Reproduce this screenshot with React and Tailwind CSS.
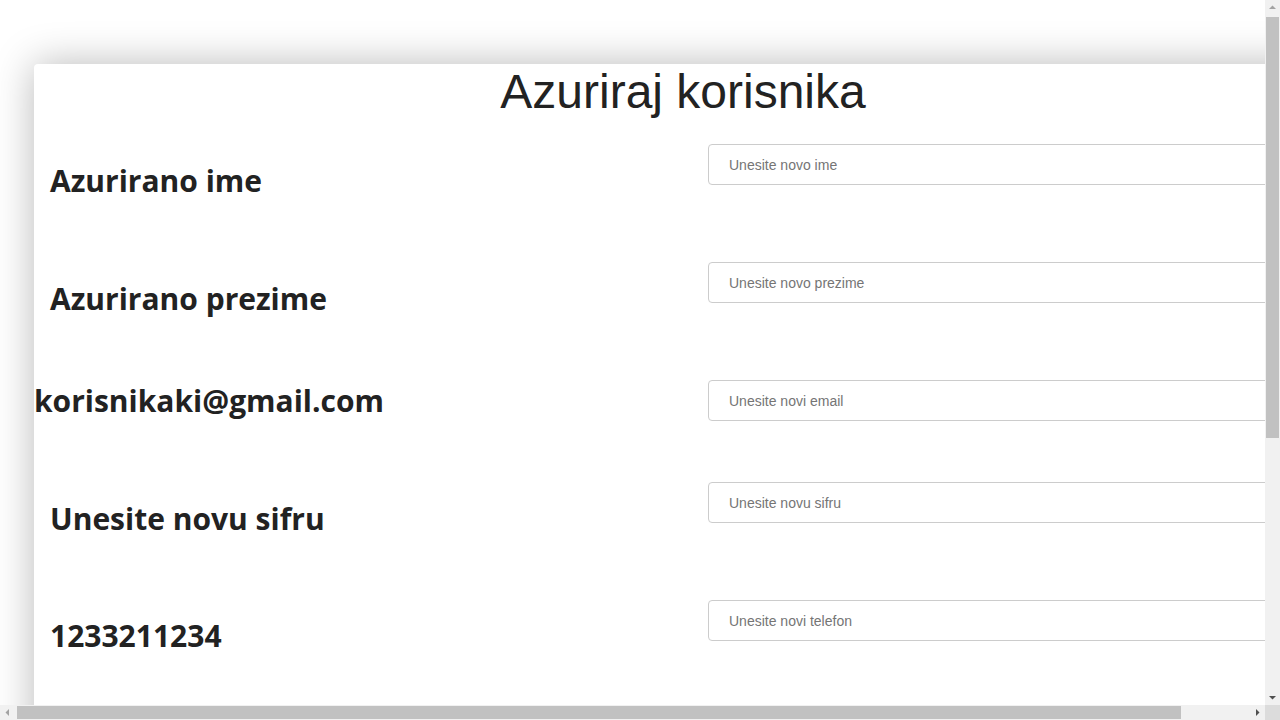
import React from "react";

const rows = [
  { label: "Azurirano ime", placeholder: "Unesite novo ime", type: "text", h: "h-[118px]", pt: "pt-[17px]", pl: "pl-4" },
  { label: "Azurirano prezime", placeholder: "Unesite novo prezime", type: "text", h: "h-[118px]", pt: "pt-[17px]", pl: "pl-4" },
  { label: "korisnikaki@gmail.com", placeholder: "Unesite novi email", type: "email", h: "h-[102px]", pt: "pt-[1px]", pl: "pl-0" },
  { label: "Unesite novu sifru", placeholder: "Unesite novu sifru", type: "password", h: "h-[118px]", pt: "pt-[17px]", pl: "pl-4" },
  { label: "1233211234", placeholder: "Unesite novi telefon", type: "tel", h: "h-[118px]", pt: "pt-[16px]", pl: "pl-4" },
];

// fake window scrollbars, the screenshot shows them
function Scrollbars() {
  return (
    <>
      <div className="fixed right-0 top-0 flex h-[705px] w-[15px] flex-col items-center bg-[#f1f1f1]">
        <svg width="15" height="15" viewBox="0 0 15 15" className="shrink-0">
          <path d="M4 9h7L7.5 5.5z" fill="#a3a3a3" />
        </svg>
        <div className="mt-[2px] h-[421px] w-[13px] bg-[#c1c1c1]" />
        <div className="flex-1" />
        <svg width="15" height="15" viewBox="0 0 15 15" className="shrink-0">
          <path d="M4 6h7L7.5 9.5z" fill="#505050" />
        </svg>
      </div>
      <div className="fixed bottom-0 left-0 flex h-[15px] w-[1265px] items-center bg-[#f1f1f1]">
        <svg width="15" height="15" viewBox="0 0 15 15" className="shrink-0">
          <path d="M9 4v7L5.5 7.5z" fill="#a3a3a3" />
        </svg>
        <div className="ml-[2px] h-[13px] w-[1164px] bg-[#c1c1c1]" />
        <div className="flex-1" />
        <svg width="15" height="15" viewBox="0 0 15 15" className="shrink-0">
          <path d="M6 4v7l3.5-3.5z" fill="#505050" />
        </svg>
      </div>
      <div className="fixed bottom-0 right-0 h-[15px] w-[15px] bg-[#dcdcdc]" />
    </>
  );
}

export default function App() {
  return (
    <div className="min-h-screen w-[1342px] bg-white pt-16 pl-[34px] pb-[20px]">
      <div className="w-[1298px] rounded-[4px] bg-white pb-[280px] shadow-[0_0_40px_rgba(0,0,0,0.28)]">
        <h1 className="text-center font-['Liberation_Sans',Arial,sans-serif] text-[48px] leading-[55px] text-[#222]">
          Azuriraj korisnika
        </h1>

        <form className="mt-[25px] flex flex-col">
          {rows.map((r) => (
            <div key={r.placeholder} className={`flex items-start ${r.h}`}>
              <div className={`w-[674px] shrink-0 ${r.pt} ${r.pl}`}>
                <h2 className="font-['Open_Sans','Noto_Sans',sans-serif] text-[30px] font-bold leading-[40px] text-[#222]">
                  {r.label}
                </h2>
              </div>
              <input
                type={r.type}
                placeholder={r.placeholder}
                className="h-[41px] w-[608px] rounded-[4px] border border-[#ccc] bg-white px-5 font-['Liberation_Sans',Arial,sans-serif] text-[14px] text-[#333] placeholder:text-[#757575] outline-none"
              />
            </div>
          ))}
        </form>
      </div>
      <Scrollbars />
    </div>
  );
}
